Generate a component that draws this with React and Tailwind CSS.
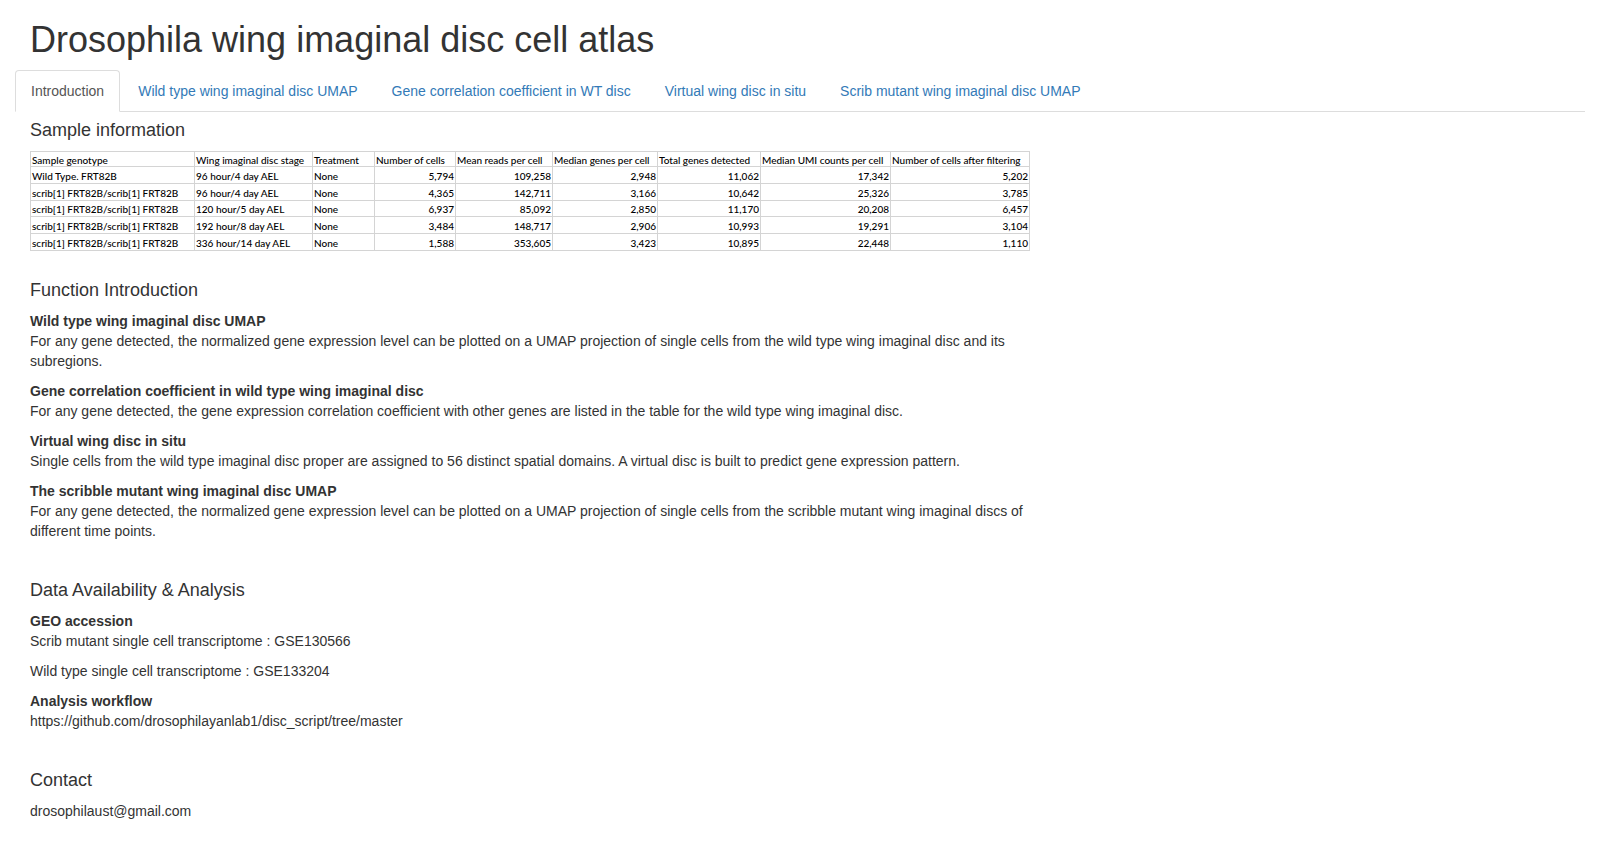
import { useState } from "react";

const tabs = [
  "Introduction",
  "Wild type wing imaginal disc UMAP",
  "Gene correlation coefficient in WT disc",
  "Virtual wing disc in situ",
  "Scrib mutant wing imaginal disc UMAP"
];

const columns = [
  { label: "Sample genotype", width: "w-[164px]" },
  { label: "Wing imaginal disc stage", width: "w-[118px]" },
  { label: "Treatment", width: "w-[62px]" },
  { label: "Number of cells", width: "w-[81px]" },
  { label: "Mean reads per cell", width: "w-[97px]" },
  { label: "Median genes per cell", width: "w-[105px]" },
  { label: "Total genes detected", width: "w-[103px]" },
  { label: "Median UMI counts per cell", width: "w-[130px]" },
  { label: "Number of cells after filtering", width: "w-[139px]" }
];

const samples = [
  ["Wild Type. FRT82B", "96 hour/4 day AEL", "None", "5,794", "109,258", "2,948", "11,062", "17,342", "5,202"],
  ["scrib[1] FRT82B/scrib[1] FRT82B", "96 hour/4 day AEL", "None", "4,365", "142,711", "3,166", "10,642", "25,326", "3,785"],
  ["scrib[1] FRT82B/scrib[1] FRT82B", "120 hour/5 day AEL", "None", "6,937", "85,092", "2,850", "11,170", "20,208", "6,457"],
  ["scrib[1] FRT82B/scrib[1] FRT82B", "192 hour/8 day AEL", "None", "3,484", "148,717", "2,906", "10,993", "19,291", "3,104"],
  ["scrib[1] FRT82B/scrib[1] FRT82B", "336 hour/14 day AEL", "None", "1,588", "353,605", "3,423", "10,895", "22,448", "1,110"]
];

const functions = [
  {
    title: "Wild type wing imaginal disc UMAP",
    text: "For any gene detected, the normalized gene expression level can be plotted on a UMAP projection of single cells from the wild type wing imaginal disc and its subregions."
  },
  {
    title: "Gene correlation coefficient in wild type wing imaginal disc",
    text: "For any gene detected, the gene expression correlation coefficient with other genes are listed in the table for the wild type wing imaginal disc."
  },
  {
    title: "Virtual wing disc in situ",
    text: "Single cells from the wild type imaginal disc proper are assigned to 56 distinct spatial domains. A virtual disc is built to predict gene expression pattern."
  },
  {
    title: "The scribble mutant wing imaginal disc UMAP",
    text: "For any gene detected, the normalized gene expression level can be plotted on a UMAP projection of single cells from the scribble mutant wing imaginal discs of different time points."
  }
];

function Section({ title, children }) {
  return (
    <section>
      <h4 className="mb-3 text-[18px] leading-[18px]">{title}</h4>
      <div className="space-y-[10px]">{children}</div>
    </section>
  );
}

function SampleTable() {
  return (
    <table className="w-[999px] h-[100px] table-fixed border-collapse border border-[#d4d4d4] font-['Lato',sans-serif] text-[10px] leading-[12px] font-medium text-black whitespace-nowrap">
      <thead>
        <tr>
          {columns.map((c) => (
            <th key={c.label} scope="col" className={`${c.width} border border-[#d4d4d4] pt-[2px] pb-0 pl-px pr-0 text-left font-medium`}>
              {c.label}
            </th>
          ))}
        </tr>
      </thead>
      <tbody>
        {samples.map((row) => (
          <tr key={row[3]}>
            {row.map((cell, i) => (
              <td key={i} className={`border border-[#d4d4d4] pt-[2px] pb-0 px-px ${i > 2 ? "text-right" : "text-left"}`}>
                {cell}
              </td>
            ))}
          </tr>
        ))}
      </tbody>
    </table>
  );
}

export default function App() {
  const [active, setActive] = useState(tabs[0]);

  return (
    <div className="px-[15px] pt-5 font-['Liberation_Sans',Arial,sans-serif] text-[14px] leading-5 text-[#333]">
      <h2 className="px-[15px] mb-[10px] text-[36px] leading-[40px]">Drosophila wing imaginal disc cell atlas</h2>

      <nav className="flex gap-[2px] border-b border-[#ddd]">
        {tabs.map((tab) => (
          <a
            key={tab}
            href="#"
            onClick={() => setActive(tab)}
            className={`-mb-px rounded-t border px-[15px] py-[10px] ${
              tab === active
                ? "border-[#ddd] border-b-white bg-white text-[#555]"
                : "border-transparent text-[#337ab7]"
            }`}
          >
            {tab}
          </a>
        ))}
      </nav>

      <main className="w-2/3 px-[15px] py-[9px]">
        <div className="mb-[30px]">
          <Section title="Sample information">
            <SampleTable />
          </Section>
        </div>

        <div className="space-y-[40px]">
          <Section title="Function Introduction">
            {functions.map((f) => (
              <p key={f.title}>
                <strong className="block">{f.title}</strong>
                {f.text}
              </p>
            ))}
          </Section>

          <Section title="Data Availability & Analysis">
            <p>
              <strong className="block">GEO accession</strong>
              Scrib mutant single cell transcriptome : GSE130566
            </p>
            <p>Wild type single cell transcriptome : GSE133204</p>
            <p>
              <strong className="block">Analysis workflow</strong>
              https://github.com/drosophilayanlab1/disc_script/tree/master
            </p>
          </Section>

          <Section title="Contact">
            <p>drosophilaust@gmail.com</p>
          </Section>
        </div>
      </main>
    </div>
  );
}
